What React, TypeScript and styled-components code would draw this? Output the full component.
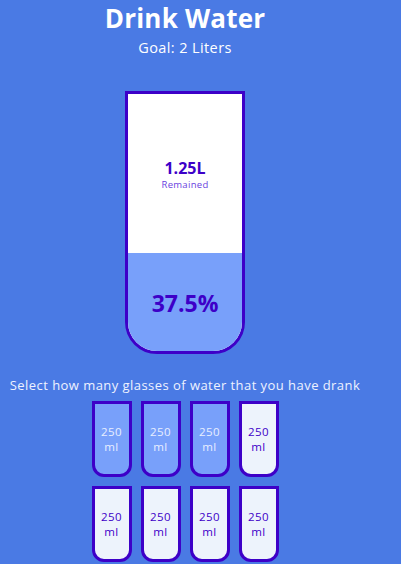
import React, { useState } from 'react';
import styled, { createGlobalStyle } from 'styled-components';

const BORDER = '#3d00c8';
const FILL = '#78a0fa';
const GOAL = 2;
const TOTAL_CUPS = 8;

const GlobalStyle = createGlobalStyle`
  html, body {
    margin: 0;
    padding: 0;
    background-color: #4a7ae4;
  }
  body {
    color: #fff;
    font-family: 'Open Sans', 'Liberation Sans', sans-serif;
  }
`;

const Page = styled.div`
  width: 370px;
  min-height: 564px;
  display: flex;
  flex-direction: column;
  align-items: center;
`;

const Title = styled.h1`
  font-size: 26px;
  font-weight: 700;
  letter-spacing: 0.2px;
  margin: 2px 0 0;
  line-height: 32px;
`;

const Goal = styled.h3`
  font-size: 14.5px;
  font-weight: 400;
  letter-spacing: 0.4px;
  margin: 5px 0 0;
  line-height: 18px;
`;

const Cup = styled.div`
  box-sizing: border-box;
  width: 120px;
  height: 263px;
  margin: 34px 0 0;
  background-color: #fff;
  border: 3px solid ${BORDER};
  border-radius: 0 0 32px 32px;
  color: ${BORDER};
  display: flex;
  flex-direction: column;
  overflow: hidden;
`;

const Remained = styled.div`
  flex: 1;
  display: flex;
  flex-direction: column;
  align-items: center;
  justify-content: center;
  text-align: center;
  padding-top: 4px;
`;

const Liters = styled.span`
  display: block;
  font-size: 16px;
  font-weight: 700;
  line-height: 19px;
`;

const RemainedLabel = styled.small`
  display: block;
  font-size: 9.5px;
  letter-spacing: 0.3px;
  line-height: 13px;
  color: #6a3fe0;
`;

const Percentage = styled.div`
  background-color: ${FILL};
  display: flex;
  align-items: center;
  justify-content: center;
  font-weight: 700;
  font-size: 23px;
  padding-top: 2px;
`;

const Text = styled.p`
  margin: 23px 0 0;
  font-size: 13px;
  letter-spacing: 0.45px;
  line-height: 16px;
  text-align: center;
  color: #eef2ff;
  white-space: nowrap;
`;

const Cups = styled.div`
  display: grid;
  grid-template-columns: repeat(4, 40px);
  column-gap: 9px;
  row-gap: 9px;
  margin-top: 8px;
`;

const SmallCup = styled.div<{ $full: boolean }>`
  box-sizing: border-box;
  width: 40px;
  height: 76px;
  border: 3px solid ${BORDER};
  border-radius: 0 0 12px 12px;
  background-color: ${props => (props.$full ? FILL : '#edf3fc')};
  color: ${props => (props.$full ? '#e8eeff' : BORDER)};
  display: flex;
  align-items: center;
  justify-content: center;
  text-align: center;
  font-size: 11.5px;
  letter-spacing: 0.5px;
  line-height: 15px;
  cursor: pointer;
`;

const App: React.FC = () => {
  const [filled, setFilled] = useState(3);

  const fraction = filled / TOTAL_CUPS;
  const remaining = GOAL - (GOAL * fraction);

  return (
    <Page>
      <GlobalStyle />
      <Title>Drink Water</Title>
      <Goal>Goal: 2 Liters</Goal>

      <Cup>
        {fraction < 1 && (
          <Remained>
            <Liters>{remaining}L</Liters>
            <RemainedLabel>Remained</RemainedLabel>
          </Remained>
        )}
        {fraction > 0 && (
          <Percentage style={{ height: `${fraction * 257}px` }}>
            {fraction * 100}%
          </Percentage>
        )}
      </Cup>

      <Text>Select how many glasses of water that you have drank</Text>

      <Cups>
        {Array.from({ length: TOTAL_CUPS }).map((_, i) => (
          <SmallCup
            key={i}
            $full={i < filled}
            onClick={() => setFilled(i + 1 === filled ? i : i + 1)}
          >
            250
            <br />
            ml
          </SmallCup>
        ))}
      </Cups>
    </Page>
  );
};

export default App;
